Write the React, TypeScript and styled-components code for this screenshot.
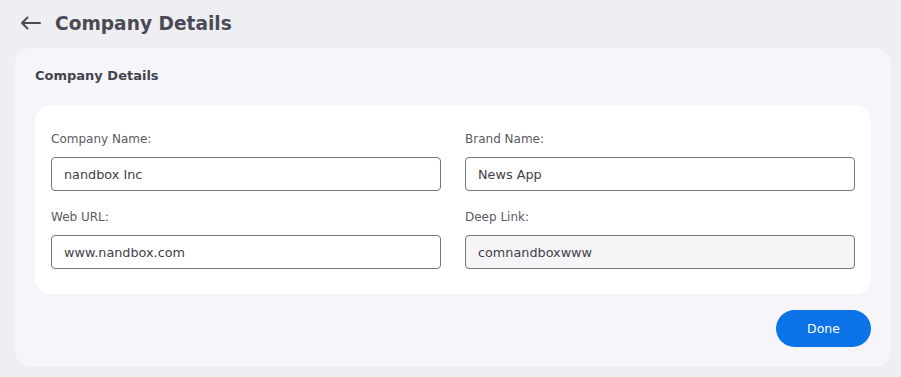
import React from "react";
import styled, { createGlobalStyle } from "styled-components";

const GlobalStyle = createGlobalStyle`
  html, body {
    margin: 0;
    padding: 0;
    background-color: #efeef2;
    font-family: "DejaVu Sans", "Noto Sans", sans-serif;
  }
`;

const Page = styled.div`
  width: 901px;
  height: 377px;
  box-sizing: border-box;
  padding: 8px 10px 10px 15px;
  display: flex;
  flex-direction: column;
`;

const Header = styled.div`
  display: flex;
  align-items: center;
  gap: 14px;
  height: 30px;
  padding-left: 5px;
  margin-bottom: 10px;
`;

const BackButton = styled.button`
  display: flex;
  align-items: center;
  justify-content: center;
  background: none;
  border: none;
  padding: 0;
  color: #4a4b54;
  cursor: pointer;
`;

const PageTitle = styled.h1`
  margin: 0;
  font-size: 18.6px;
  font-weight: 700;
  color: #4a4b54;
`;

const Card = styled.div`
  flex: 1;
  background-color: #f6f5f9;
  border-radius: 16px;
  padding: 20px 20px 18px 20px;
  display: flex;
  flex-direction: column;
`;

const CardTitle = styled.h2`
  margin: 0 0 22px 0;
  font-size: 13px;
  font-weight: 700;
  color: #43444c;
`;

const FormPanel = styled.div`
  background-color: #ffffff;
  border-radius: 16px;
  padding: 26px 16px 25px 16px;
  display: grid;
  grid-template-columns: 1fr 1fr;
  column-gap: 24px;
  row-gap: 18px;
`;

const Field = styled.div`
  display: flex;
  flex-direction: column;
`;

const Label = styled.label`
  font-size: 12px;
  color: #5a5b62;
  margin-bottom: 10px;
  line-height: 16px;
`;

const Input = styled.input<{ $readOnly?: boolean }>`
  height: 34px;
  box-sizing: border-box;
  border: 1px solid #767676;
  border-radius: 4px;
  padding: 0 12px;
  font-family: inherit;
  font-size: 12.8px;
  color: #3f4047;
  background-color: ${(p) => (p.$readOnly ? "#f5f5f7" : "#ffffff")};
  outline: none;
`;

const Footer = styled.div`
  display: flex;
  justify-content: flex-end;
  margin-top: 16px;
`;

const DoneButton = styled.button`
  width: 95px;
  height: 37px;
  border: none;
  border-radius: 19px;
  background-color: #0b72e7;
  color: #ffffff;
  font-family: inherit;
  font-size: 12.5px;
  font-weight: 500;
  cursor: pointer;
`;

const fields = [
  { label: "Company Name:", value: "nandbox Inc" },
  { label: "Brand Name:", value: "News App" },
  { label: "Web URL:", value: "www.nandbox.com" },
  { label: "Deep Link:", value: "comnandboxwww", readOnly: true },
];

const App = () => {
  return (
    <>
      <GlobalStyle />
      <Page>
        <Header>
          <BackButton>
            <svg width="21" height="14" viewBox="0 0 21 14" fill="none">
              <path
                d="M20 7H2M7.5 1.5L2 7l5.5 5.5"
                stroke="currentColor"
                strokeWidth="2"
                strokeLinecap="round"
                strokeLinejoin="round"
              />
            </svg>
          </BackButton>
          <PageTitle>Company Details</PageTitle>
        </Header>
        <Card>
          <CardTitle>Company Details</CardTitle>
          <FormPanel>
            {fields.map((f) => (
              <Field key={f.label}>
                <Label>{f.label}</Label>
                <Input
                  defaultValue={f.value}
                  readOnly={f.readOnly}
                  $readOnly={f.readOnly}
                />
              </Field>
            ))}
          </FormPanel>
          <Footer>
            <DoneButton>Done</DoneButton>
          </Footer>
        </Card>
      </Page>
    </>
  );
};

export default App;
